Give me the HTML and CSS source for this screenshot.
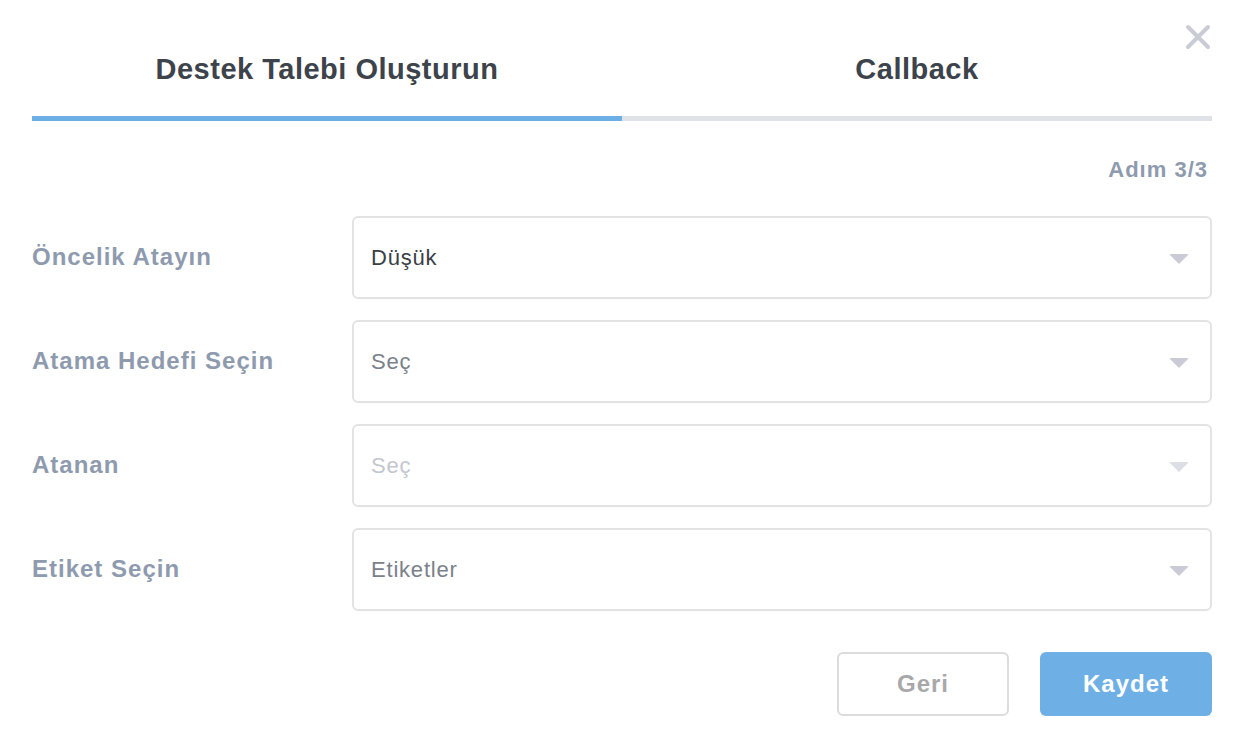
FILE: index.html
```html
<!DOCTYPE html>
<html lang="tr">
<head>
  <meta charset="UTF-8">
  <meta name="viewport" content="width=device-width, initial-scale=1.0">
  <title>Destek Talebi Oluşturun</title>
  <link rel="stylesheet" href="styles.css">
</head>
<body>
  <div class="modal">
    <!-- Close -->
    <button class="close" aria-label="Kapat">
      <svg width="26" height="26" viewBox="0 0 26 26">
        <path d="M3 3 L23 23 M23 3 L3 23" stroke="#c9cbd6" stroke-width="4" stroke-linecap="round" fill="none"/>
      </svg>
    </button>

    <!-- Tabs -->
    <div class="tabs">
      <div class="tab active">Destek Talebi Oluşturun</div>
      <div class="tab">Callback</div>
    </div>
    <div class="progress">
      <div class="progress-fill"></div>
    </div>

    <div class="step">Adım 3/3</div>

    <!-- Form -->
    <form class="form">
      <div class="row">
        <label class="label">Öncelik Atayın</label>
        <div class="select">
          <span class="value">Düşük</span>
          <span class="caret"></span>
        </div>
      </div>
      <div class="row">
        <label class="label">Atama Hedefi Seçin</label>
        <div class="select">
          <span class="placeholder">Seç</span>
          <span class="caret"></span>
        </div>
      </div>
      <div class="row">
        <label class="label">Atanan</label>
        <div class="select disabled">
          <span class="placeholder">Seç</span>
          <span class="caret"></span>
        </div>
      </div>
      <div class="row">
        <label class="label">Etiket Seçin</label>
        <div class="select">
          <span class="placeholder">Etiketler</span>
          <span class="caret"></span>
        </div>
      </div>

      <div class="actions">
        <button type="button" class="btn btn-back">Geri</button>
        <button type="submit" class="btn btn-save">Kaydet</button>
      </div>
    </form>
  </div>
</body>
</html>
```

FILE: styles.css
```css
* {
  box-sizing: border-box;
}

body {
  margin: 0;
  background: #fff;
  font-family: "Liberation Sans", Arial, sans-serif;
}

.modal {
  position: relative;
  width: 1240px;
  height: 746px;
  padding: 0 28px 0 32px;
}

.close {
  position: absolute;
  top: 24px;
  right: 29px;
  padding: 0;
  border: none;
  background: none;
  cursor: pointer;
}

.close svg {
  display: block;
}

.tabs {
  display: flex;
  padding-top: 49px;
}

.tab {
  flex: 1;
  text-align: center;
  font-size: 29px;
  font-weight: bold;
  line-height: 40px;
  letter-spacing: 0.5px;
  color: #3d434b;
}

.progress {
  margin-top: 27px;
  height: 5px;
  background: #dfe3e8;
}

.progress-fill {
  width: 50%;
  height: 100%;
  background: #6caee6;
}

.step {
  margin-top: 35px;
  padding-right: 4px;
  text-align: right;
  font-size: 22px;
  font-weight: bold;
  line-height: 28px;
  letter-spacing: 1px;
  color: #8e9aae;
}

.form {
  margin-top: 32px;
  display: flex;
  flex-direction: column;
  gap: 21px;
}

.row {
  display: flex;
  align-items: center;
}

.label {
  width: 320px;
  flex-shrink: 0;
  padding-bottom: 2px;
  font-size: 24px;
  font-weight: bold;
  letter-spacing: 1px;
  color: #8e9aae;
}

.select {
  flex: 1;
  height: 83px;
  display: flex;
  align-items: center;
  justify-content: space-between;
  padding: 0 21px 0 17px;
  border: 2px solid #e3e3e3;
  border-radius: 6px;
  font-size: 22px;
  letter-spacing: 0.8px;
}

.value {
  color: #3a3f46;
}

.placeholder {
  color: #7b818b;
}

.select.disabled .placeholder {
  color: #c3c7ce;
}

.caret {
  width: 0;
  height: 0;
  margin-top: 2px;
  border-left: 10px solid transparent;
  border-right: 10px solid transparent;
  border-top: 10px solid #c9cbd6;
  border-radius: 2px;
}

.select.disabled .caret {
  border-top-color: #dcdee5;
}

.actions {
  display: flex;
  justify-content: flex-end;
  gap: 31px;
  margin-top: 20px;
}

.btn {
  width: 172px;
  height: 64px;
  border-radius: 6px;
  font-family: inherit;
  font-size: 24px;
  font-weight: bold;
  letter-spacing: 1px;
  cursor: pointer;
}

.btn-back {
  background: #fff;
  border: 2px solid #dcdcdc;
  color: #a8a8aa;
}

.btn-save {
  background: #6eb0e6;
  border: none;
  color: #fff;
}
```
